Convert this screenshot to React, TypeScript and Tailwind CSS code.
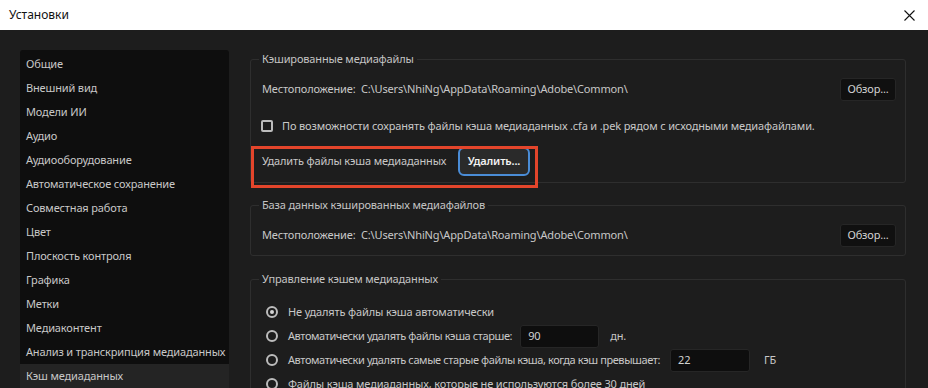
const NAV = [
  'Общие',
  'Внешний вид',
  'Модели ИИ',
  'Аудио',
  'Аудиооборудование',
  'Автоматическое сохранение',
  'Совместная работа',
  'Цвет',
  'Плоскость контроля',
  'Графика',
  'Метки',
  'Медиаконтент',
  'Анализ и транскрипция медиаданных',
  'Кэш медиаданных',
];

const PATH = 'C:\\Users\\NhiNg\\AppData\\Roaming\\Adobe\\Common\\';

function Radio({ checked }: { checked?: boolean }) {
  return (
    <span className="w-[12px] h-[12px] rounded-full border-2 border-[#bcbcbc] flex items-center justify-center shrink-0">
      {checked && <span className="w-[4px] h-[4px] rounded-full bg-[#d4d4d4]" />}
    </span>
  );
}

function BrowseButton() {
  return (
    <button className="ml-auto h-[23px] w-[56px] rounded-[3px] bg-[#101010] border border-[#262626] text-[#d2d2d2] text-[11px] tracking-[-0.15px]">
      Обзор...
    </button>
  );
}

function Location() {
  return (
    <div className="h-[24px] flex items-center whitespace-nowrap">
      <span className="w-[99px] shrink-0">Местоположение:</span>
      <span>{PATH}</span>
      <BrowseButton />
    </div>
  );
}

function Section({ title, className, children }: { title: string; className?: string; children: React.ReactNode }) {
  return (
    <fieldset className={`relative border border-[#2e2e2e] rounded-[3px] pl-[11px] pr-[9px] ${className ?? ''}`}>
      <legend className="ml-[-3px] px-[3px] leading-[16px] text-[#c4c4c4]">{title}</legend>
      {children}
    </fieldset>
  );
}

export default function App() {
  return (
    <div className="w-[928px] h-[388px] overflow-hidden bg-[#1d1d1d] text-[11px] tracking-[-0.15px] text-[#c8c8c8] whitespace-nowrap" style={{ fontFamily: '"Noto Sans", "Open Sans", sans-serif' }}>
      {/* Title bar */}
      <div className="h-[30px] bg-white flex items-center justify-between pl-[9px] pr-[12px]">
        <span className="text-[12px] tracking-normal text-[#111]">Установки</span>
        <svg width="11" height="11" viewBox="0 0 11 11" className="mr-[1px]">
          <path d="M0.5 0.5L10.5 10.5M10.5 0.5L0.5 10.5" stroke="#111" strokeWidth="1.1" />
        </svg>
      </div>

      <div className="flex h-[358px]">
        {/* Sidebar */}
        <div className="ml-[20px] mt-[20px] w-[209px] bg-[#0e0e0e] rounded-[3px] pt-[2px] shrink-0">
          {NAV.map((item, i) => (
            <div
              key={item}
              className={`h-[24px] flex items-center px-[6px] ${i === NAV.length - 1 ? 'bg-[#242424]' : ''}`}
            >
              {item}
            </div>
          ))}
        </div>

        {/* Content */}
        <div className="ml-[21px] w-[656px] pt-[21px] shrink-0">
          <Section title="Кэшированные медиафайлы" className="pb-[9px]">
            <div className="mt-[10px]">
              <Location />
            </div>
            <div className="h-[24px] mt-[13px] flex items-center">
              <span className="w-[12px] h-[12px] border-2 border-[#bcbcbc] rounded-[2px] mr-[9px] -ml-[1px]" />
              По возможности сохранять файлы кэша медиаданных .cfa и .pek рядом с исходными медиафайлами.
            </div>
            <div className="h-[24px] mt-[11px] flex items-center">
              <span className="w-[196px] shrink-0">Удалить файлы кэша медиаданных</span>
              <button className="h-[29px] w-[72px] rounded-[6px] border-2 border-[#4a8cd6] bg-[#2a2a2a] text-[#f2f2f2] font-semibold text-[11px] tracking-[-0.15px]">
                Удалить...
              </button>
            </div>
            {/* annotation */}
            <div className="absolute left-[0px] top-[79px] w-[287px] h-[42px] border-[3px] border-[#e3452b] pointer-events-none" />
          </Section>

          <Section title="База данных кэшированных медиафайлов" className="mt-[14px] pb-[8px]">
            <div className="mt-[10px]">
              <Location />
            </div>
          </Section>

          <Section title="Управление кэшем медиаданных" className="mt-[15px] h-[140px]">
            <div className="mt-[13px] flex flex-col">
              <div className="h-[24px] flex items-center gap-[10px] pl-[4px]">
                <Radio checked />
                Не удалять файлы кэша автоматически
              </div>
              <div className="h-[24px] flex items-center gap-[10px] pl-[4px]">
                <Radio />
                <span className="shrink-0 tracking-[-0.4px] -mr-[2px]">Автоматически удалять файлы кэша старше:</span>
                <span className="h-[23px] w-[79px] bg-[#0e0e0e] border border-[#262626] rounded-[3px] px-[7px] flex items-center text-[#d2d2d2]">90</span>
                <span className="ml-[1px]">дн.</span>
              </div>
              <div className="h-[24px] flex items-center gap-[10px] pl-[4px]">
                <Radio />
                <span className="shrink-0 tracking-[-0.4px]">Автоматически удалять самые старые файлы кэша, когда кэш превышает:</span>
                <span className="h-[23px] w-[80px] bg-[#0e0e0e] border border-[#262626] rounded-[3px] px-[7px] flex items-center text-[#d2d2d2]">22</span>
                <span className="ml-[4px]">ГБ</span>
              </div>
              <div className="h-[24px] flex items-center gap-[10px] pl-[4px]">
                <Radio />
                Файлы кэша медиаданных, которые не используются более 30 дней
              </div>
            </div>
          </Section>
        </div>
      </div>
    </div>
  );
}
